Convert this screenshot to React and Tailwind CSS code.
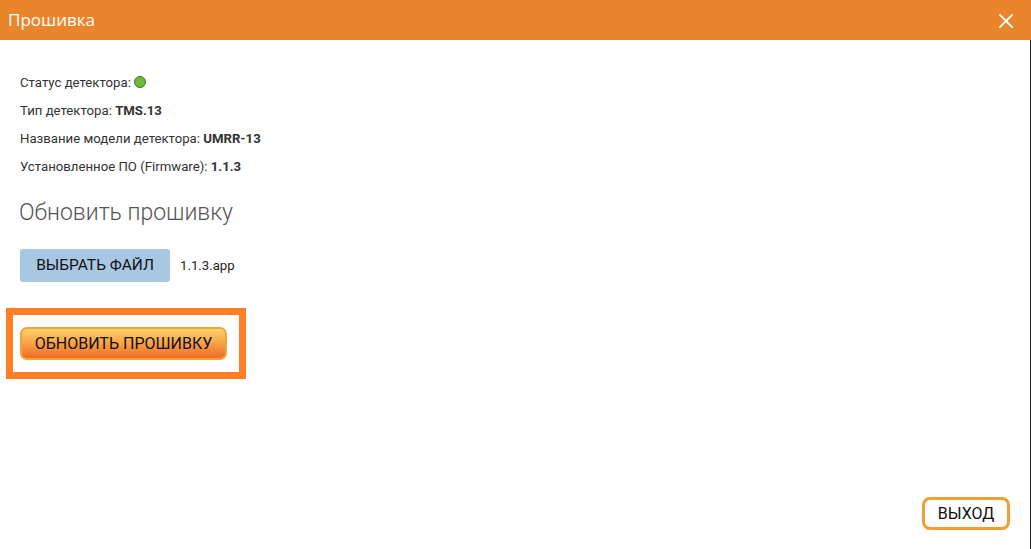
export default function App() {
  return (
    <div className="w-[1031px] h-[549px] flex flex-col bg-white overflow-hidden" style={{ fontFamily: "Roboto, 'Noto Sans', sans-serif" }}>
      <div className="h-[40px] bg-[#e9852a] flex items-center justify-between pl-[8px] pr-[18px] shrink-0">
        <span className="text-[17px] text-white" style={{ fontFamily: "'Open Sans', 'Noto Sans', sans-serif" }}>Прошивка</span>
        <svg width="14" height="14" viewBox="0 0 14 14" className="mt-[1px]">
          <path d="M1 1 L13 13 M13 1 L1 13" stroke="white" strokeWidth="1.8" strokeLinecap="square" />
        </svg>
      </div>
      <div className="flex-1 flex flex-col border-r border-[#222] relative">
        <div className="pl-[20px] pt-[34px] text-[13.2px] text-[#333] flex flex-col gap-[10px] leading-[18px]">
          <div className="flex items-center gap-[3px]">Статус детектора:<span className="inline-block w-[12px] h-[12px] rounded-full bg-[#6fb83f] border border-[#3d7a1c] mt-[-3px]"></span></div>
          <div>Тип детектора: <b className="font-bold">TMS.13</b></div>
          <div>Название модели детектора: <b className="font-bold">UMRR-13</b></div>
          <div>Установленное ПО (Firmware): <b className="font-bold">1.1.3</b></div>
        </div>
        <div className="pl-[19px] mt-[22px] text-[23px] font-light text-[#555] leading-[30px]">Обновить прошивку</div>
        <div className="pl-[20px] mt-[21px] flex items-center gap-[10px]">
          <div className="w-[150px] h-[33px] rounded-[3px] bg-[#a8c7e2] flex items-center justify-center text-[15.5px] text-[#111]">ВЫБРАТЬ ФАЙЛ</div>
          <span className="text-[13.2px] text-[#222]">1.1.3.app</span>
        </div>
        <div className="ml-[6px] mt-[26px] w-[240px] h-[71px] border-[7px] border-[#ff7f27] pl-[7px] pt-[12px]">
          <div className="w-[207px] h-[33px] rounded-[7px] border-2 border-[#f3a437] bg-gradient-to-b from-[#f9d36a] to-[#f06a22] flex items-center justify-center text-[16px] text-[#111]">ОБНОВИТЬ ПРОШИВКУ</div>
        </div>
        <div className="flex-1"></div>
        <div className="flex justify-end pr-[20px] pb-[19px]">
          <div className="w-[88px] h-[33px] rounded-[8px] border-[3px] border-[#f0a030] bg-white flex items-center justify-center text-[16px] text-[#111]">ВЫХОД</div>
        </div>
      </div>
    </div>
  );
}
